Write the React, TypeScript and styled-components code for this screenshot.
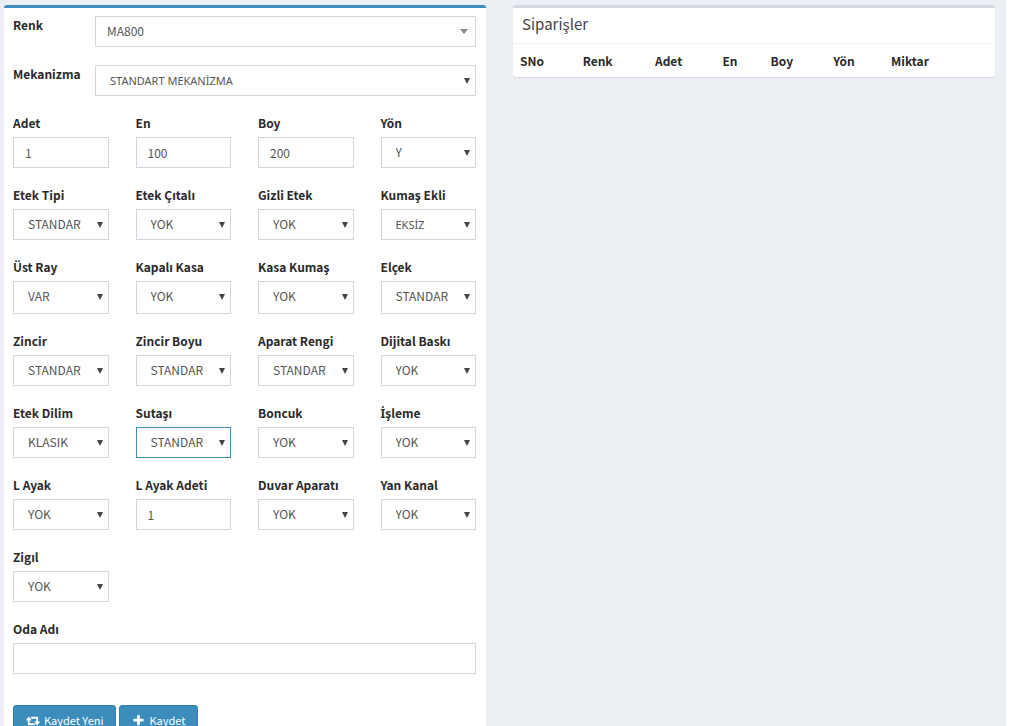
import React, { useId } from "react";
import styled, { createGlobalStyle, css } from "styled-components";

const GlobalStyle = createGlobalStyle`
  *, *::before, *::after { box-sizing: border-box; }
  body {
    margin: 0;
    background: #fff;
    color: #333;
    font-family: "Noto Sans CJK SC", "Noto Sans", sans-serif;
    font-size: 12px;
    line-height: 18px;
  }
`;

const Page = styled.main`
  display: grid;
  grid-template-columns: minmax(0, 1fr) minmax(0, 1fr);
  align-items: start;
  gap: 27px;
  min-height: 100vh;
  margin-right: 18px;
  padding: 5px 11px 0 4px;
  background: #ecf0f5;
`;

const Panel = styled.section<{ $accent: string }>`
  background: #fff;
  border-top: 3px solid ${(p) => p.$accent};
  border-radius: 3px;
  box-shadow: 0 1px 1px rgba(0, 0, 0, 0.1);
`;

const OrderForm = styled.form`
  display: flex;
  flex-direction: column;
  gap: 18px;
  padding: 8px 10px 18px 9px;
`;

const InlineField = styled.div`
  display: grid;
  grid-template-columns: 82px minmax(0, 1fr);
  align-items: start;
`;

const FieldGrid = styled.div`
  display: grid;
  grid-template-columns: repeat(4, minmax(0, 1fr));
  gap: 18px 27px;
`;

const Field = styled.div`
  display: flex;
  flex-direction: column;
  gap: 5px;
`;

const Label = styled.label`
  color: #2a2a2a;
  font-weight: 700;
  white-space: nowrap;
`;

const DottedCapital = styled.span`
  font-family: "Noto Sans", sans-serif;
  line-height: 1;
`;

const controlStyle = css`
  display: block;
  width: 100%;
  height: 31px;
  margin: 0;
  border: 1px solid #d2d6de;
  border-radius: 0;
  background: #fff;
  color: #555;
  font: inherit;
  outline: none;
`;

const TextInput = styled.input`
  ${controlStyle}
  padding: 0 11px 1px;
`;

const SelectBox = styled.div`
  position: relative;
`;

const Select = styled.select<{ $tall?: boolean; $active?: boolean; $search?: boolean; $dotted?: boolean }>`
  ${controlStyle}
  appearance: none;
  height: ${(p) => (p.$tall ? 33 : 31)}px;
  padding: 0 27px ${(p) => (p.$tall ? 3 : 1)}px ${(p) => (p.$search ? 11 : 14)}px;
  border-color: ${(p) => (p.$active ? "#3c8dbc" : "#d2d6de")};
  ${(p) =>
    p.$dotted &&
    css`
      padding-bottom: 0;
      font-family: "Noto Sans", sans-serif;
      font-size: 11px;
    `}
`;

const Arrow = styled.svg<{ $search?: boolean }>`
  position: absolute;
  top: 13px;
  right: ${(p) => (p.$search ? 8 : 6)}px;
  width: ${(p) => (p.$search ? 8 : 6)}px;
  height: ${(p) => (p.$search ? 5 : 6)}px;
  fill: ${(p) => (p.$search ? "#888" : "#444")};
  pointer-events: none;
`;

const Actions = styled.div`
  display: flex;
  gap: 3px;
  padding-top: 13px;
`;

const Button = styled.button`
  display: flex;
  align-items: center;
  gap: 4px;
  height: 31px;
  padding: 0 12px 1px;
  border: 1px solid #367fa9;
  border-radius: 3px;
  background: #3c8dbc;
  color: #fff;
  font: inherit;
  font-size: 11px;
`;

const ButtonIcon = styled.svg`
  height: 13px;
  fill: currentColor;
`;

const PanelTitle = styled.h3`
  margin: 0;
  padding: 6px 9px 9px;
  border-bottom: 1px solid #f4f4f4;
  color: #444;
  font-size: 15px;
  font-weight: 400;
  line-height: 20px;
`;

const OrdersTable = styled.table`
  width: 100%;
  table-layout: fixed;
  border-collapse: collapse;
`;

const HeadCell = styled.th<{ $share: number }>`
  width: ${(p) => p.$share}%;
  padding: 8px 7px 7px;
  color: #2a2a2a;
  text-align: left;
  font-weight: 700;
`;

interface FieldDef {
  label: string;
  value: string;
  kind?: "text";
  tall?: boolean;
  active?: boolean;
}

const fields: FieldDef[] = [
  { label: "Adet", value: "1", kind: "text" },
  { label: "En", value: "100", kind: "text" },
  { label: "Boy", value: "200", kind: "text" },
  { label: "Yön", value: "Y" },
  { label: "Etek Tipi", value: "STANDART" },
  { label: "Etek Çıtalı", value: "YOK" },
  { label: "Gizli Etek", value: "YOK" },
  { label: "Kumaş Ekli", value: "EKSİZ" },
  { label: "Üst Ray", value: "VAR", tall: true },
  { label: "Kapalı Kasa", value: "YOK", tall: true },
  { label: "Kasa Kumaş", value: "YOK", tall: true },
  { label: "Elçek", value: "STANDART", tall: true },
  { label: "Zincir", value: "STANDART" },
  { label: "Zincir Boyu", value: "STANDART" },
  { label: "Aparat Rengi", value: "STANDART" },
  { label: "Dijital Baskı", value: "YOK" },
  { label: "Etek Dilim", value: "KLASIK" },
  { label: "Sutaşı", value: "STANDART", active: true },
  { label: "Boncuk", value: "YOK" },
  { label: "İşleme", value: "YOK" },
  { label: "L Ayak", value: "YOK" },
  { label: "L Ayak Adeti", value: "1", kind: "text" },
  { label: "Duvar Aparatı", value: "YOK" },
  { label: "Yan Kanal", value: "YOK" },
  { label: "Zigıl", value: "YOK" },
];

const columns = [
  { title: "SNo", share: 13 },
  { title: "Renk", share: 15 },
  { title: "Adet", share: 14 },
  { title: "En", share: 10 },
  { title: "Boy", share: 13 },
  { title: "Yön", share: 12 },
  { title: "Miktar", share: 23 },
];

interface DropdownProps {
  id: string;
  value: string;
  tall?: boolean;
  active?: boolean;
  search?: boolean;
}

function Dropdown({ id, value, tall, active, search }: DropdownProps) {
  return (
    <SelectBox>
      <Select
        id={id}
        defaultValue={value}
        $tall={tall}
        $active={active}
        $search={search}
        $dotted={value.includes("İ")}
      >
        <option>{value}</option>
      </Select>
      <Arrow $search={search} viewBox="0 0 6 6" preserveAspectRatio="none" aria-hidden="true">
        <path d="M0 0H6L3 6Z" />
      </Arrow>
    </SelectBox>
  );
}

// The main family has no dotted capital I, so that letter is set in Noto Sans.
function LabelText({ text }: { text: string }) {
  if (!text.startsWith("İ")) return <>{text}</>;
  return (
    <>
      <DottedCapital>İ</DottedCapital>
      {text.slice(1)}
    </>
  );
}

function GridField({ label, value, kind, tall, active }: FieldDef) {
  const id = useId();
  return (
    <Field>
      <Label htmlFor={id}>
        <LabelText text={label} />
      </Label>
      {kind === "text" ? (
        <TextInput id={id} type="text" defaultValue={value} />
      ) : (
        <Dropdown id={id} value={value} tall={tall} active={active} />
      )}
    </Field>
  );
}

export default function App() {
  return (
    <>
      <GlobalStyle />
      <Page>
        <Panel $accent="#3c8dbc">
          <OrderForm onSubmit={(e) => e.preventDefault()}>
            <InlineField>
              <Label htmlFor="renk">Renk</Label>
              <Dropdown id="renk" value="MA800" search />
            </InlineField>
            <InlineField>
              <Label htmlFor="mekanizma">Mekanizma</Label>
              <Dropdown id="mekanizma" value="STANDART MEKANİZMA" />
            </InlineField>
            <FieldGrid>
              {fields.map((f) => (
                <GridField key={f.label} {...f} />
              ))}
            </FieldGrid>
            <Field>
              <Label htmlFor="oda">Oda Adı</Label>
              <TextInput id="oda" type="text" />
            </Field>
            <Actions>
              <Button type="submit">
                <ButtonIcon viewBox="0 0 1920 1792" aria-hidden="true">
                  <path d="M1280 1504q0 13-9.5 22.5t-22.5 9.5h-960q-8 0-13.5-2t-9-7-5.5-8-3-11.5-1-11.5v-600h-192q-26 0-45-19t-19-45q0-24 15-41l320-384q19-22 49-22t49 22l320 384q15 17 15 41 0 26-19 45t-45 19h-192v384h576q16 0 25 11l160 192q7 10 7 21zm640-416q0 24-15 41l-320 384q-20 23-49 23t-49-23l-320-384q-15-17-15-41 0-26 19-45t45-19h192v-384h-576q-16 0-25-12l-160-192q-7-9-7-20 0-13 9.5-22.5t22.5-9.5h960q8 0 13.5 2t9 7 5.5 8 3 11.5 1 11.5v600h192q26 0 45 19t19 45z" />
                </ButtonIcon>
                Kaydet Yeni
              </Button>
              <Button type="button">
                <ButtonIcon viewBox="0 0 1792 1792" aria-hidden="true">
                  <path d="M1600 736v192q0 40-28 68t-68 28h-416v416q0 40-28 68t-68 28h-192q-40 0-68-28t-28-68v-416h-416q-40 0-68-28t-28-68v-192q0-40 28-68t68-28h416v-416q0-40 28-68t68-28h192q40 0 68 28t28 68v416h416q40 0 68 28t28 68z" />
                </ButtonIcon>
                Kaydet
              </Button>
            </Actions>
          </OrderForm>
        </Panel>
        <Panel $accent="#d2d6de">
          <PanelTitle>Siparişler</PanelTitle>
          <OrdersTable>
            <thead>
              <tr>
                {columns.map((c) => (
                  <HeadCell key={c.title} scope="col" $share={c.share}>
                    {c.title}
                  </HeadCell>
                ))}
              </tr>
            </thead>
          </OrdersTable>
        </Panel>
      </Page>
    </>
  );
}
